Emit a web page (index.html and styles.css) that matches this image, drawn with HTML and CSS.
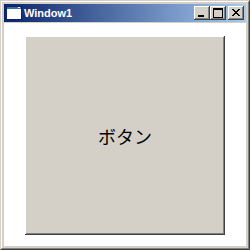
FILE: index.html
```html
<!DOCTYPE html>
<html>
<head>
<meta charset="utf-8">
<link rel="stylesheet" href="styles.css">
</head>
<body>
<div class="window">
  <div class="frame">
    <div class="titlebar">
      <svg class="appicon" width="16" height="14" viewBox="0 0 16 14">
        <rect x="0" y="0" width="16" height="14" fill="#0a246a"/>
        <rect x="1" y="3" width="14" height="10" fill="#ffffff"/>
        <rect x="1" y="1" width="14" height="2" fill="#3a6ea5"/>
        <rect x="12" y="1" width="2" height="1" fill="#ffffff"/>
      </svg>
      <span class="title">Window1</span>
      <div class="caption-buttons">
        <div class="cbtn">
          <svg width="16" height="14" viewBox="0 0 16 14"><rect x="4" y="9" width="6" height="2" fill="#000"/></svg>
        </div>
        <div class="cbtn">
          <svg width="16" height="14" viewBox="0 0 16 14"><rect x="3" y="2" width="9" height="9" fill="none" stroke="#000" stroke-width="1" transform="translate(0.5 0.5)"/><rect x="3" y="2" width="10" height="2" fill="#000"/></svg>
        </div>
        <div class="cbtn close">
          <svg width="16" height="14" viewBox="0 0 16 14"><path d="M4 3 L11 10 M5 3 L12 10 M11 3 L4 10 M12 3 L5 10" stroke="#000" stroke-width="1" shape-rendering="crispEdges"/></svg>
        </div>
      </div>
    </div>
    <div class="client">
      <div class="button"><span class="label">ボタン</span></div>
    </div>
  </div>
</div>
</body>
</html>
```
FILE: styles.css
```css
html, body {
  margin: 0;
  padding: 0;
  background: #ffffff;
}
.window {
  width: 250px;
  height: 250px;
  box-sizing: border-box;
  border: 1px solid;
  border-color: #d4d0c8 #404040 #404040 #d4d0c8;
}
.frame {
  height: 100%;
  box-sizing: border-box;
  border: 1px solid;
  border-color: #ffffff #808080 #808080 #ffffff;
  background: #d4d0c8;
  padding: 2px;
  display: flex;
  flex-direction: column;
}
.titlebar {
  height: 18px;
  flex: none;
  background: linear-gradient(to right, #0a246a, #a6caf0);
  display: flex;
  align-items: center;
  padding-left: 2px;
  padding-right: 2px;
}
.appicon {
  display: block;
  flex: none;
}
.title {
  margin-left: 2px;
  font-family: "Liberation Sans", Arial, sans-serif;
  font-weight: bold;
  font-size: 11px;
  color: #ffffff;
  flex: 1;
}
.caption-buttons {
  display: flex;
}
.cbtn {
  width: 16px;
  height: 14px;
  box-sizing: border-box;
  background: #d4d0c8;
  box-shadow: inset -1px -1px #404040, inset 1px 1px #ffffff, inset -2px -2px #808080;
  position: relative;
}
.cbtn svg {
  display: block;
  position: absolute;
  left: 0;
  top: 0;
}
.cbtn.close {
  margin-left: 2px;
}
.client {
  flex: 1;
  margin-top: 1px;
  background: #ffffff;
  padding: 13px 21px 11px 21px;
  display: flex;
}
.button {
  flex: 1;
  background: #d4d0c8;
  box-shadow: inset -1px -1px #404040, inset 1px 1px #ffffff, inset -2px -2px #808080;
  display: flex;
  align-items: center;
  justify-content: center;
}
.label {
  font-family: "Noto Sans CJK JP", sans-serif;
  font-size: 18px;
  color: #000000;
}
```
